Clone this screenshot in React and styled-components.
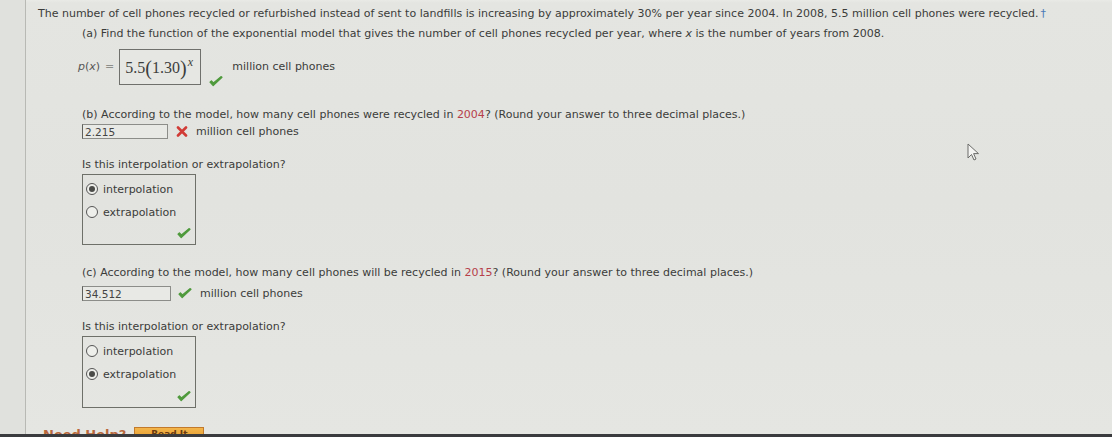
import React from "react";
import styled, { createGlobalStyle } from "styled-components";

const Global = createGlobalStyle`
  html, body { margin: 0; padding: 0; }
  body {
    background: #e3e4e0;
    font-family: "DejaVu Sans", Verdana, sans-serif;
    color: #3b3c3a;
    overflow: hidden;
  }
`;

const Page = styled.div`
  position: relative;
  display: flex;
  width: 1112px;
  height: 437px;
  overflow: hidden;
  background: linear-gradient(180deg, #e9eae6 0px, #e4e5e1 3px, #e2e3df 200px, #e5e6e2 437px);
`;

const Gutter = styled.div`
  width: 25px;
  flex: none;
  border-right: 1px solid #b8b9b4;
  background: #e0e1dd;
`;

const Main = styled.div`
  flex: 1;
  padding: 6px 0 0 12px;
  font-size: 11px;
`;

const Line = styled.div`
  height: 16px;
  line-height: 16px;
  white-space: nowrap;
  margin-top: ${(p) => p.$mt || 0}px;
`;

const Dagger = styled.span`
  color: #4a7bb7;
  margin-left: 2px;
`;

const Indent = styled.div`
  margin-left: 44px;
`;

const Red = styled.span`
  color: #b6404a;
`;

const FormulaRow = styled.div`
  display: flex;
  align-items: center;
  margin: ${(p) => p.$mt || 0}px 0 0 -4px;
  height: 37px;
`;

const PLabel = styled.span`
  font-size: 11px;
  margin-right: 5px;
  color: #555;
`;

const Eq = styled.span`
  color: #8d8e8a;
  margin-right: 5px;
`;

const MathBox = styled.div`
  width: 82px;
  height: 36px;
  box-sizing: border-box;
  border: 1px solid #6f706c;
  display: flex;
  align-items: center;
  padding: 3px 0 0 5px;
  font-family: "Liberation Serif", "Times New Roman", serif;
  font-size: 16px;
  color: #3d3e3c;
  background: #e6e7e3;
  white-space: nowrap;
`;

const Sup = styled.span`
  font-style: italic;
  font-size: 12px;
  align-self: flex-start;
  margin: 2px 0 0 1px;
`;

const Paren = styled.span`
  font-size: 20px;
  font-weight: 300;
  line-height: 1;
`;

const CheckHang = styled.div`
  align-self: flex-end;
  margin: 0 0 -5px 8px;
`;

const Units = styled.span`
  margin-left: ${(p) => p.$ml || 0}px;
`;

const InputRow = styled.div`
  display: flex;
  align-items: center;
  height: 17px;
  margin-top: ${(p) => p.$mt || 0}px;
`;

const Input = styled.div`
  width: ${(p) => p.$w}px;
  height: 15px;
  box-sizing: border-box;
  border: 1px solid #8c8d89;
  border-left: 1.5px solid #5f605c;
  line-height: 14px;
  padding-left: 2px;
  font-size: 10.5px;
  color: #444;
  background: #e8e9e5;
`;

const Mark = styled.span`
  display: inline-flex;
  margin-left: ${(p) => p.$ml || 0}px;
`;

const RadioBox = styled.div`
  width: 114px;
  height: ${(p) => p.$h}px;
  box-sizing: border-box;
  border: 1px solid #6e7069;
  margin-top: ${(p) => p.$mt || 0}px;
  padding: 5px 0 0 3px;
  display: flex;
  flex-direction: column;
  gap: 5px;
`;

const Option = styled.div`
  display: flex;
  align-items: center;
  height: 18px;
  gap: 5px;
`;

const Circle = styled.span`
  width: 10px;
  height: 10px;
  border-radius: 50%;
  border: 1px solid #555;
  background: #eeefeb;
  display: flex;
  align-items: center;
  justify-content: center;
  &::after {
    content: "";
    display: ${(p) => (p.$on ? "block" : "none")};
    width: 6px;
    height: 6px;
    border-radius: 50%;
    background: #4a4b48;
  }
`;

const BoxCheck = styled.div`
  margin-top: auto;
  align-self: flex-end;
  margin-right: 4px;
  margin-bottom: 2px;
`;

const HelpRow = styled.div`
  display: flex;
  align-items: flex-start;
  margin: 18px 0 0 5px;
  gap: 8px;
`;

const Help = styled.span`
  font-weight: bold;
  font-size: 13px;
  color: #b9683c;
  line-height: 14px;
  padding-top: 2px;
`;

const ReadIt = styled.div`
  width: 70px;
  height: 14px;
  box-sizing: border-box;
  border: 1px solid #c27a2c;
  background: linear-gradient(#f3b54b, #e49a2c);
  margin-top: 1px;
  font-size: 9px;
  font-weight: bold;
  color: #6a3a10;
  text-align: center;
  line-height: 12px;
`;

const BottomBar = styled.div`
  position: absolute;
  left: 0;
  right: 0;
  bottom: 0;
  height: 3px;
  background: #3a3b3e;
`;

const Cursor = styled.svg`
  position: absolute;
  left: 967px;
  top: 143px;
`;

const Check = () => (
  <svg width="14" height="11" viewBox="0 0 14 11">
    <path d="M1 6.2 L4.2 9.6 L13 1.2 L12 0.6 L4.4 7 L2.4 4.8 Z" fill="#4f9a3c" stroke="#4f9a3c" strokeWidth="1.2" strokeLinejoin="round" />
  </svg>
);

const Cross = () => (
  <svg width="12" height="11" viewBox="0 0 12 11">
    <path d="M2 1.5 L10 9.5 M10 1.5 L2 9.5" stroke="#d13b36" strokeWidth="2.6" strokeLinecap="round" />
  </svg>
);

const Radios = ({ sel, h, mt }) => (
  <RadioBox $h={h} $mt={mt}>
    <Option>
      <Circle $on={sel === 0} />
      interpolation
    </Option>
    <Option>
      <Circle $on={sel === 1} />
      extrapolation
    </Option>
    <BoxCheck>
      <Check />
    </BoxCheck>
  </RadioBox>
);

export default function App() {
  return (
    <Page>
      <Global />
      <Gutter />
      <Main>
        <Line>
          The number of cell phones recycled or refurbished instead of sent to landfills is increasing by approximately 30% per year since 2004. In 2008, 5.5 million cell phones were recycled.<Dagger>†</Dagger>
        </Line>
        <Indent>
          <Line $mt={4}>
            (a) Find the function of the exponential model that gives the number of cell phones recycled per year, where <i>x</i> is the number of years from 2008.
          </Line>
          <FormulaRow $mt={6}>
            <PLabel><i>p</i>(<i>x</i>)</PLabel>
            <Eq>=</Eq>
            <MathBox>
              5.5<Paren>(</Paren>1.30<Paren>)</Paren><Sup>x</Sup>
            </MathBox>
            <CheckHang>
              <Check />
            </CheckHang>
            <Units $ml={9}>million cell phones</Units>
          </FormulaRow>
          <Line $mt={22}>
            (b) According to the model, how many cell phones were recycled in <Red>2004</Red>? (Round your answer to three decimal places.)
          </Line>
          <InputRow>
            <Input $w={86}>2.215</Input>
            <Mark $ml={8}><Cross /></Mark>
            <Units $ml={8}>million cell phones</Units>
          </InputRow>
          <Line $mt={17}>Is this interpolation or extrapolation?</Line>
          <Radios sel={0} h={71} mt={1} />
          <Line $mt={20}>
            (c) According to the model, how many cell phones will be recycled in <Red>2015</Red>? (Round your answer to three decimal places.)
          </Line>
          <InputRow $mt={4}>
            <Input $w={89}>34.512</Input>
            <Mark $ml={7}><Check /></Mark>
            <Units $ml={8}>million cell phones</Units>
          </InputRow>
          <Line $mt={17}>Is this interpolation or extrapolation?</Line>
          <Radios sel={1} h={72} mt={1} />
        </Indent>
        <HelpRow>
          <Help>Need Help?</Help>
          <ReadIt>Read It</ReadIt>
        </HelpRow>
      </Main>
      <Cursor width="14" height="20" viewBox="0 0 14 20">
        <path d="M1 1 L1 15 L4.5 11.5 L7 17 L9 16 L6.6 10.6 L11.5 10.6 Z" fill="#f4f4f2" stroke="#6a6b68" strokeWidth="1" strokeLinejoin="round" />
      </Cursor>
      <BottomBar />
    </Page>
  );
}
